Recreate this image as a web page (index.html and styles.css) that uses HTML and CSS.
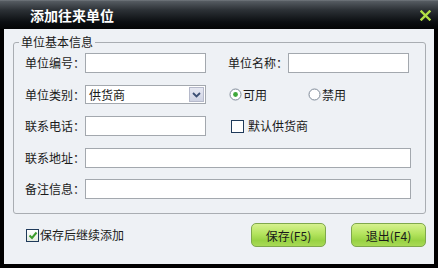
FILE: index.html
```html
<!DOCTYPE html>
<html lang="zh-CN">
<head>
  <meta charset="UTF-8" />
  <title>添加往来单位</title>
  <link rel="stylesheet" href="styles.css">
</head>
<body>
  <div class="window">
    <div class="titlebar">
      <span class="title">添加往来单位</span>
      <span class="close">
        <svg width="11" height="11" viewBox="0 0 11 11"><path d="M1.5 1.5 L9.5 9.5 M9.5 1.5 L1.5 9.5" stroke="#b2e046" stroke-width="2.4" stroke-linecap="square"/></svg>
      </span>
    </div>

    <div class="content">
      <fieldset class="group">
        <legend>单位基本信息</legend>
        <div class="grid">
          <label class="lbl">单位编号：</label>
          <input class="txt" type="text" />
          <span></span>
          <label class="lbl">单位名称：</label>
          <input class="txt" type="text" />

          <label class="lbl">单位类别：</label>
          <div class="select">
            <span class="select-val">供货商</span>
            <span class="select-btn">
              <svg width="9" height="6" viewBox="0 0 9 6"><path d="M1 1 L4.5 4.5 L8 1" fill="none" stroke="#3c4f74" stroke-width="1.8"/></svg>
            </span>
          </div>
          <span></span>
          <div class="radios">
            <label class="opt opt-wide">
              <span class="radio">
                <svg width="13" height="13" viewBox="0 0 13 13"><circle cx="6.5" cy="6.5" r="5.5" fill="#fff" stroke="#7e8a98"/><circle cx="6.5" cy="6.5" r="2.4" fill="#3fa83a"/></svg>
              </span>可用
            </label>
            <label class="opt">
              <span class="radio">
                <svg width="13" height="13" viewBox="0 0 13 13"><circle cx="6.5" cy="6.5" r="5.5" fill="#fff" stroke="#7e8a98"/></svg>
              </span>禁用
            </label>
          </div>

          <label class="lbl">联系电话：</label>
          <input class="txt" type="text" />
          <span></span>
          <label class="opt check-row">
            <span class="box"></span>默认供货商
          </label>

          <label class="lbl">联系地址：</label>
          <input class="txt wide" type="text" />

          <label class="lbl">备注信息：</label>
          <input class="txt wide" type="text" />
        </div>
      </fieldset>

      <div class="footer">
        <label class="opt keep">
          <span class="box checked">
            <svg width="10" height="9" viewBox="0 0 10 9"><path d="M1.5 4.5 L4 7 L8.5 1.5" fill="none" stroke="#3c9c2c" stroke-width="2"/></svg>
          </span>保存后继续添加
        </label>
        <div class="buttons">
          <button class="btn">保存(F5)</button>
          <button class="btn">退出(F4)</button>
        </div>
      </div>
    </div>
  </div>
</body>
</html>
```

FILE: styles.css
```css
body {
  margin: 0;
  font-family: "Noto Sans CJK SC", "Liberation Sans", sans-serif;
  font-size: 12px;
  color: #1a1a1a;
  background: #000;
}
.window {
  width: 438px;
  height: 268px;
  display: flex;
  flex-direction: column;
  background: #000;
}
.titlebar {
  height: 29px;
  display: flex;
  align-items: center;
  padding: 0 7px 0 30px;
  background: linear-gradient(to bottom, #7d8389 0, #565c62 1px, #2c3136 10px, #0b0e11 22px, #040506 29px);
  box-sizing: border-box;
}
.title {
  color: #fff;
  font-size: 14px;
  font-weight: bold;
  line-height: 16px;
}
.close {
  display: flex;
  margin-left: auto;
  margin-top: 1px;
}
.content {
  flex: 1;
  margin: 0 4px 4px 4px;
  background: #eef1f5;
  padding: 6px 8px 0 9px;
}
.group {
  margin: 0;
  padding: 4px 14px 14px 11px;
  border: 1px solid #a9adb2;
  border-radius: 3px;
}
.group legend {
  margin-left: -6px;
  padding: 0 2px;
  font-size: 12px;
  line-height: 14px;
}
.grid {
  display: grid;
  grid-template-columns: 60px 121px 22px 60px 123px;
  grid-auto-rows: 20px;
  row-gap: 11.5px;
  align-items: center;
}
.lbl {
  white-space: nowrap;
  line-height: 20px;
}
.txt {
  width: 121px;
  height: 20px;
  box-sizing: border-box;
  border: 1px solid #a3a8ae;
  background: #fff;
  margin: 0;
  padding: 0 3px;
  font: inherit;
}
.txt.wide {
  grid-column: 2 / 6;
  width: 326px;
}
.select {
  width: 121px;
  height: 19px;
  box-sizing: border-box;
  border: 1px solid #a3a8ae;
  background: #fff;
  display: flex;
  align-items: center;
  justify-content: space-between;
  padding: 0 1px 0 3px;
}
.select-val {
  line-height: 17px;
}
.select-btn {
  width: 15px;
  height: 15px;
  box-sizing: border-box;
  border: 1px solid #b5b9ca;
  background: linear-gradient(to bottom, #e6e8f2, #cfd3e3);
  display: flex;
  align-items: center;
  justify-content: center;
}
.radios {
  grid-column: 4 / 6;
  display: flex;
  align-items: center;
  padding-left: 1px;
}
.opt {
  display: flex;
  align-items: center;
  white-space: nowrap;
  line-height: 16px;
}
.opt-wide {
  width: 79px;
}
.radio {
  display: flex;
  margin-right: 1px;
}
.check-row {
  grid-column: 4 / 6;
  padding-left: 3px;
}
.box {
  width: 13px;
  height: 13px;
  box-sizing: border-box;
  border: 1px solid #1f3a5a;
  background: #fff;
  margin-right: 4px;
  display: flex;
  align-items: center;
  justify-content: center;
}
.footer {
  display: flex;
  align-items: center;
  justify-content: space-between;
  margin-top: 9px;
}
.keep {
  padding-left: 13px;
}
.keep .box {
  margin-right: 1px;
  background: linear-gradient(to bottom, #fff, #e4ebe0);
}
.buttons {
  display: flex;
  gap: 25px;
}
.btn {
  width: 75px;
  height: 24px;
  border: 1px solid #7fa84c;
  border-radius: 5px;
  background: linear-gradient(to bottom, #d6f18e 0, #b4e45e 45%, #98d243 75%, #a9da56 100%);
  font-family: "Noto Sans CJK SC", "Liberation Sans", sans-serif;
  font-size: 12px;
  color: #1a1a1a;
  padding: 0;
  cursor: pointer;
}
```
